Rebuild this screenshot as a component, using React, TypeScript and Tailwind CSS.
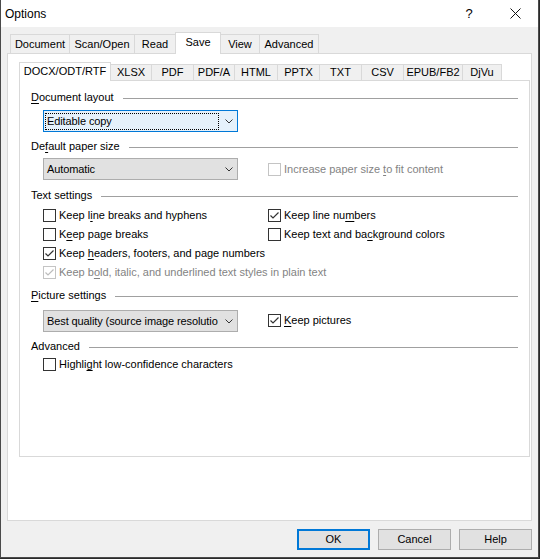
import React from "react";

const outerTabs = [
    { label: "Document", cls: "w-[60px]" },
    { label: "Scan/Open", cls: "w-[66px] -ml-px" },
    { label: "Read", cls: "w-[42px] -ml-px" },
    { label: "Save", cls: "w-[46px] -ml-px", active: true },
    { label: "View", cls: "w-[40px] -ml-px" },
    { label: "Advanced", cls: "w-[60px] -ml-px" },
];

const innerTabs = [
    { label: "DOCX/ODT/RTF", cls: "w-[92px]", active: true },
    { label: "XLSX", cls: "w-[42px] -ml-px" },
    { label: "PDF", cls: "w-[43px] -ml-px" },
    { label: "PDF/A", cls: "w-[42px] -ml-px" },
    { label: "HTML", cls: "w-[44px] -ml-px" },
    { label: "PPTX", cls: "w-[43px] -ml-px" },
    { label: "TXT", cls: "w-[43px] -ml-px" },
    { label: "CSV", cls: "w-[43px] -ml-px" },
    { label: "EPUB/FB2", cls: "w-[60px] -ml-px" },
    { label: "DjVu", cls: "w-[40px] -ml-px" },
];

function Chevron() {
    return (
        <svg width="8" height="5" viewBox="0 0 8 5" className="mr-[4px]">
            <polyline points="0.5,0.5 4,4 7.5,0.5" fill="none" stroke="#333" strokeWidth="1" />
        </svg>
    );
}

function Combo({ text, focused }: { text: string; focused?: boolean }) {
    return (
        <div
            className={`w-[195px] h-[22px] border flex items-center justify-between ${
                focused ? "border-[#0078d7] bg-[#e5f1fb]" : "border-[#adadad] bg-[#e1e1e1]"
            }`}
        >
            <div
                className={`ml-px w-[174px] h-[17px] flex items-center pl-[1px] overflow-hidden whitespace-nowrap tracking-[-0.1px] border ${
                    focused ? "border-dotted border-black" : "border-transparent"
                }`}
            >
                {text}
            </div>
            <Chevron />
        </div>
    );
}

function Check({
    checked,
    disabled,
    children,
}: {
    checked?: boolean;
    disabled?: boolean;
    children: React.ReactNode;
}) {
    const stroke = disabled ? "#bcbcbc" : "#333333";
    return (
        <div className={`flex items-center gap-[3px] h-[19px] ${disabled ? "text-[#838383]" : ""}`}>
            <span
                className={`w-[13px] h-[13px] border bg-white flex items-center justify-center shrink-0 ${
                    disabled ? "border-[#c4c4c4]" : "border-[#333333]"
                }`}
            >
                {checked && (
                    <svg width="11" height="11" viewBox="0 0 11 11">
                        <polyline points="1.5,5.5 4,8 9.5,2.5" fill="none" stroke={stroke} strokeWidth="1.2" />
                    </svg>
                )}
            </span>
            <span className="whitespace-nowrap">{children}</span>
        </div>
    );
}

function Group({ children, className = "" }: { children: React.ReactNode; className?: string }) {
    return (
        <div className={`flex items-center h-[14px] mr-[11px] ${className}`}>
            <span className="whitespace-nowrap">{children}</span>
            <span className="flex-1 h-px bg-[#a0a0a0] ml-[9px] mt-[2px]" />
        </div>
    );
}

function U({ children }: { children: React.ReactNode }) {
    return <span className="underline underline-offset-[2px]">{children}</span>;
}

export default function App() {
    return (
        <div className="w-[540px] h-[559px] bg-[#2a2a2a] font-['Liberation_Sans',Arial,sans-serif] text-[11px] text-black">
            <div className="w-[539px] h-[558px] bg-[#f0f0f0] border-l border-r border-b border-[#4a4a4a] flex flex-col">
                {/* title bar */}
                <div className="h-[27px] bg-white flex items-center text-[12px]">
                    <span className="pl-[4px]">Options</span>
                    <div className="ml-auto flex h-full">
                        <div className="w-[46px] flex items-center justify-center text-[13px]">?</div>
                        <div className="w-[46px] flex items-center justify-center">
                            <svg width="11" height="11" viewBox="0 0 11 11">
                                <path d="M0.5 0.5 L10.5 10.5 M10.5 0.5 L0.5 10.5" stroke="#111" strokeWidth="1" />
                            </svg>
                        </div>
                    </div>
                </div>

                {/* outer tabs */}
                <div className="ml-[6px] mt-[5px] w-[525px]">
                    <div className="flex items-end h-[21px] pl-[3px] relative z-10">
                        {outerTabs.map((t) => (
                            <div
                                key={t.label}
                                className={`${t.cls} border border-b-0 border-[#d9d9d9] flex items-center justify-center ${
                                    t.active ? "h-[22px] -mb-px bg-white pb-[3px]" : "h-[19px] bg-[#f0f0f0]"
                                }`}
                            >
                                {t.label}
                            </div>
                        ))}
                    </div>
                    <div className="h-[468px] border border-[#d9d9d9] bg-white">
                        {/* inner tabs */}
                        <div className="ml-[11px] mt-[8px] w-[511px]">
                            <div className="flex items-end h-[18px] relative z-10">
                                {innerTabs.map((t) => (
                                    <div
                                        key={t.label}
                                        className={`${t.cls} border border-b-0 border-[#d9d9d9] flex items-center justify-center ${
                                            t.active ? "h-[19px] -mb-px bg-white pb-[2px]" : "h-[16px] bg-[#f0f0f0]"
                                        }`}
                                    >
                                        {t.label}
                                    </div>
                                ))}
                            </div>
                            <div className="h-[377px] border border-[#d9d9d9] bg-white pl-[11px]">
                                <Group className="mt-[9px]">
                                    <U>D</U>ocument layout
                                </Group>
                                <div className="ml-[12px] mt-[6px]">
                                    <Combo text="Editable copy" focused />
                                </div>

                                <Group className="mt-[7px]">
                                    De<U>f</U>ault paper size
                                </Group>
                                <div className="ml-[12px] mt-[5px] grid grid-cols-[225px_1fr] items-center">
                                    <Combo text="Automatic" />
                                    <Check disabled>
                                        Increase paper size <U>t</U>o fit content
                                    </Check>
                                </div>

                                <Group className="mt-[8px]">Text settings</Group>
                                <div className="ml-[12px] mt-[4px] grid grid-cols-[225px_1fr]">
                                    <Check>
                                        Keep l<U>i</U>ne breaks and hyphens
                                    </Check>
                                    <Check checked>
                                        Keep line nu<U>m</U>bers
                                    </Check>
                                    <Check>
                                        K<U>e</U>ep page breaks
                                    </Check>
                                    <Check>
                                        Keep text and ba<U>c</U>kground colors
                                    </Check>
                                    <div className="col-span-2">
                                        <Check checked>
                                            Keep <U>h</U>eaders, footers, and page numbers
                                        </Check>
                                    </div>
                                    <div className="col-span-2">
                                        <Check checked disabled>
                                            Keep b<U>o</U>ld, italic, and underlined text styles in plain text
                                        </Check>
                                    </div>
                                </div>

                                <Group className="mt-[6px]">
                                    <U>P</U>icture settings
                                </Group>
                                <div className="ml-[12px] mt-[8px] grid grid-cols-[225px_1fr] items-center">
                                    <Combo text="Best quality (source image resolution)" />
                                    <div className="-mt-[2px]">
                                        <Check checked>
                                            <U>K</U>eep pictures
                                        </Check>
                                    </div>
                                </div>

                                <Group className="mt-[7px]">Advanced</Group>
                                <div className="ml-[12px] mt-[2px]">
                                    <Check>
                                        Highli<U>g</U>ht low-confidence characters
                                    </Check>
                                </div>
                            </div>
                        </div>
                    </div>
                </div>

                {/* buttons */}
                <div className="mt-[8px] flex justify-end gap-[8px] pr-[6px]">
                    <button className="w-[73px] h-[21px] border-2 border-[#0078d7] bg-[#e1e1e1]">OK</button>
                    <button className="w-[73px] h-[21px] border border-[#adadad] bg-[#e1e1e1]">Cancel</button>
                    <button className="w-[73px] h-[21px] border border-[#adadad] bg-[#e1e1e1]">Help</button>
                </div>
            </div>
        </div>
    );
}
